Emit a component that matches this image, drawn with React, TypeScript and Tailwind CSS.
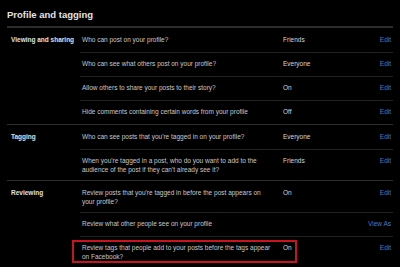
import React from "react";

type Row = {
  question: string;
  value: string;
  action: string;
  highlight?: boolean;
};

type Section = {
  label: string;
  rows: Row[];
};

const SECTIONS: Section[] = [
  {
    label: "Viewing and sharing",
    rows: [
      { question: "Who can post on your profile?", value: "Friends", action: "Edit" },
      { question: "Who can see what others post on your profile?", value: "Everyone", action: "Edit" },
      { question: "Allow others to share your posts to their story?", value: "On", action: "Edit" },
      { question: "Hide comments containing certain words from your profile", value: "Off", action: "Edit" },
    ],
  },
  {
    label: "Tagging",
    rows: [
      { question: "Who can see posts that you're tagged in on your profile?", value: "Everyone", action: "Edit" },
      {
        question:
          "When you're tagged in a post, who do you want to add to the audience of the post if they can't already see it?",
        value: "Friends",
        action: "Edit",
      },
    ],
  },
  {
    label: "Reviewing",
    rows: [
      {
        question: "Review posts that you're tagged in before the post appears on your profile?",
        value: "On",
        action: "Edit",
      },
      { question: "Review what other people see on your profile", value: "", action: "View As" },
      {
        question: "Review tags that people add to your posts before the tags appear on Facebook?",
        value: "On",
        action: "Edit",
        highlight: true,
      },
    ],
  },
];

function SettingRow({ row, first }: { row: Row; first: boolean }) {
  return (
    <div
      className={`relative flex items-start min-h-[24px] py-[6px] pl-[2px] border-t ${
        first ? "border-transparent" : "border-[#222]"
      }`}
    >
      <div className="w-[192px] text-[#c9c9c9]">{row.question}</div>
      <div className="ml-[9px] flex-1 text-[#d6d6d6]">{row.value}</div>
      <div className="pr-[2px] text-[#4a7bc0]">{row.action}</div>

      {/* red annotation box */}
      {row.highlight && (
        <div className="absolute left-[-8px] top-[3px] w-[225px] h-[23px] border-2 border-[#c8141c]" />
      )}
    </div>
  );
}

export default function App() {
  return (
    <div
      className="w-[400px] h-[267px] overflow-hidden bg-black px-[7px] text-[6.5px] leading-[9px]"
      style={{ fontFamily: '"Liberation Sans", Arial, sans-serif' }}
    >
      {/* header */}
      <div className="h-[26px] flex items-center">
        <h1 className="text-[9.5px] font-bold text-[#e4e4e4] pt-[2px]">Profile and tagging</h1>
      </div>
      <div className="h-[2px] bg-[#2c2c2c]" />

      {SECTIONS.map((section, i) => (
        <div key={section.label} className={`flex ${i === 0 ? "" : "border-t border-[#2c2c2c]"}`}>
          <div className="w-[73px] pl-[4px] pt-[7px] font-bold text-[#e0e0e0]">{section.label}</div>
          <div className="flex-1">
            {section.rows.map((row, j) => (
              <SettingRow key={row.question} row={row} first={j === 0} />
            ))}
          </div>
        </div>
      ))}
    </div>
  );
}
